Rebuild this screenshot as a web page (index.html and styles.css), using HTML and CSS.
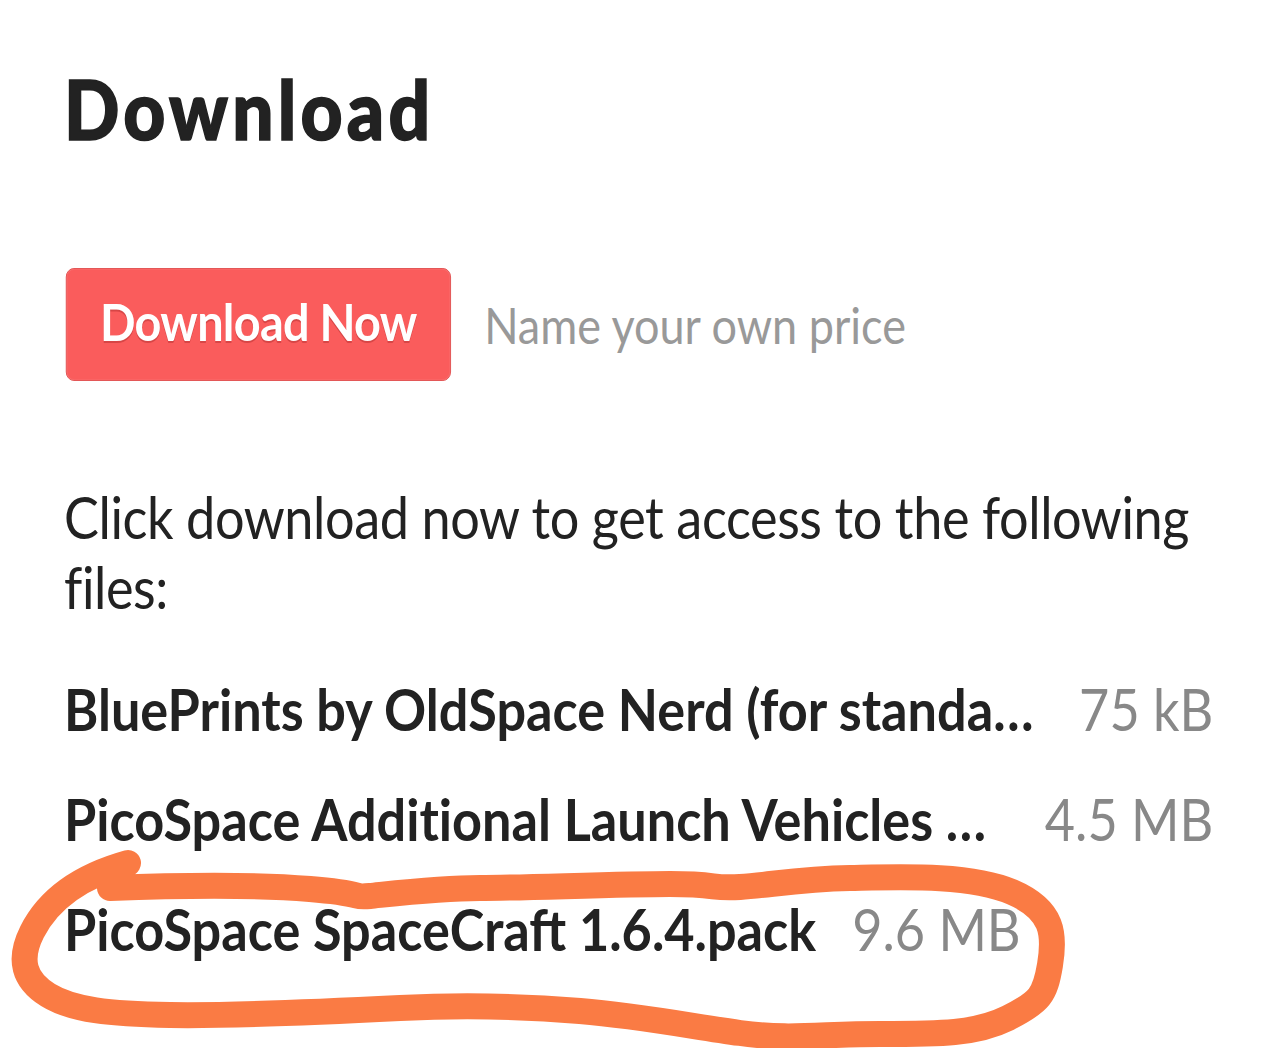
FILE: index.html
```html
<!DOCTYPE html>
<html lang="en">
<head>
    <meta charset="UTF-8">
    <meta name="viewport" content="width=device-width, initial-scale=1.0">
    <title>Download</title>
    <link rel="stylesheet" href="styles.css">
</head>
<body>
    <div class="page">
        <h2 class="title">Download</h2>

        <!-- Botón de compra -->
        <div class="buy-row">
            <a class="button" href="#">Download Now</a>
            <span class="price">Name your own price</span>
        </div>

        <p class="info">Click download now to get access to the following files:</p>

        <!-- Lista de archivos -->
        <div class="uploads">
            <div class="upload truncated">
                <strong class="name">BluePrints by OldSpace Nerd (for standa…</strong>
                <span class="size">75 kB</span>
            </div>
            <div class="upload truncated">
                <strong class="name">PicoSpace Addit&zwnj;ional Launch Vehicles …</strong>
                <span class="size">4.5 MB</span>
            </div>
            <div class="upload">
                <strong class="name">PicoSpace SpaceCraft 1.6.4.pack</strong>
                <span class="size">9.6 MB</span>
            </div>
        </div>
    </div>

    <!-- marca a mano alzada sobre el último archivo -->
    <svg class="scribble" width="1280" height="1048" viewBox="0 0 1280 1048">
        <path d="M 110 888
                 C 160 886, 250 884, 310 889
                 S 350 898, 370 896
                 S 440 888, 480 888
                 S 620 884, 670 884
                 S 710 889, 740 887
                 S 800 879, 850 878
                 S 970 874, 1012 892
                 S 1055 935, 1050 965
                 S 1040 1002, 1008 1018
                 S 940 1034, 880 1034
                 S 790 1040, 740 1033
                 S 640 1016, 580 1011
                 S 460 1005, 400 1008
                 S 230 1016, 170 1015
                 S 72 1010, 48 995
                 S 18 960, 32 932
                 S 74 878, 128 863"
              fill="none" stroke="#fa7b44" stroke-width="26"
              stroke-linecap="round" stroke-linejoin="round"/>
    </svg>
</body>
</html>
```

FILE: styles.css
```css
body {
    font-family: Lato, "Noto Sans", sans-serif;
    background-color: #fff;
    color: #222;
    margin: 0;
    overflow: hidden;
}
/* la tipografía del móvil es más estrecha: se comprime todo el bloque en horizontal */
.page {
    width: 1277px;
    margin-left: 64px;
    transform: scaleX(0.9);
    transform-origin: 0 0;
}
.title {
    font-size: 81px;
    font-weight: 900;
    letter-spacing: 4.7px;
    -webkit-text-stroke: 1.6px #222;
    line-height: 97px;
    margin: 60px 0 0;
}
.buy-row {
    display: flex;
    align-items: center;
    margin-top: 111px;
}
.button {
    display: inline-block;
    background-color: #fa5c5c;
    border: 1px solid #e25252;
    border-radius: 9px;
    box-shadow: inset 0 0 1px rgba(255, 255, 255, 0.6);
    color: #fff;
    text-decoration: none;
    text-shadow: 0 2px 0 rgba(150, 30, 30, 0.35);
    font-size: 52px;
    font-weight: 700;
    letter-spacing: -0.8px;
    line-height: 64px;
    margin-left: 2px;
    padding: 20px 37px 27px 37px;
}
.price {
    color: #999;
    font-size: 50px;
    margin-left: 37px;
}
.info {
    font-size: 58px;
    letter-spacing: -0.45px;
    line-height: 70px;
    margin: 101px 0 0;
}
.uploads {
    margin-top: 32px;
}
.upload {
    display: flex;
    font-size: 58px;
    line-height: 110px;
    white-space: nowrap;
}
.upload .name {
    font-weight: 700;
    overflow: hidden;
    text-overflow: ellipsis;
    min-width: 0;
}
.upload.truncated .name {
    flex: 1;
}
.upload .size {
    color: #888;
    margin-left: 40px;
    flex-shrink: 0;
}
.scribble {
    position: absolute;
    top: 0;
    left: 0;
    pointer-events: none;
}
```
